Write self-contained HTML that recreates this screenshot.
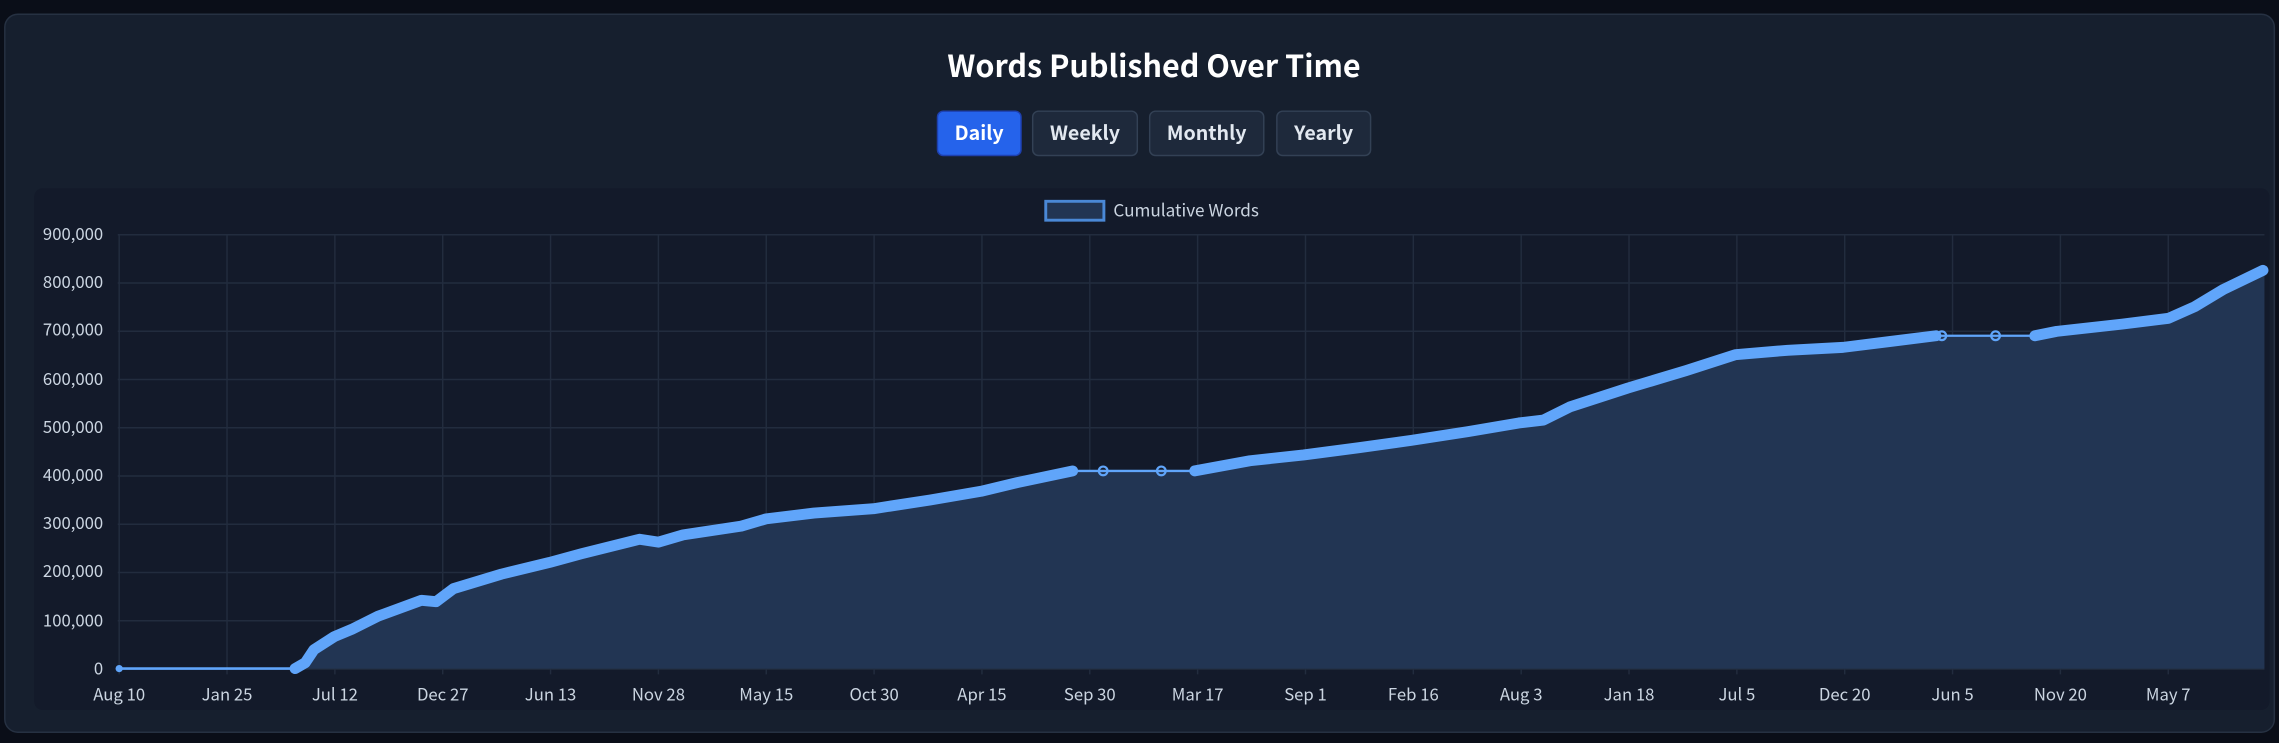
<!DOCTYPE html>
<html><head><meta charset="utf-8"><style>
html,body{margin:0;padding:0;background:#0a0e18;width:2279px;height:743px;overflow:hidden}
svg{display:block}
</style></head><body>
<svg width="2279" height="743" viewBox="0 0 1568 511.2" preserveAspectRatio="none" xmlns="http://www.w3.org/2000/svg" font-family="'Noto Sans CJK SC','Liberation Sans',sans-serif">
<rect x="0" y="0" width="1568" height="511.2" fill="#0a0e18"/>
<rect x="3.3" y="9.8" width="1561.5" height="494" rx="9" fill="#161f2e" stroke="#263142" stroke-width="1"/>
<text x="794" y="53" text-anchor="middle" fill="#ffffff" font-size="21" font-weight="bold">Words Published Over Time</text>
<rect x="645" y="76.5" width="57.5" height="30.5" rx="4" fill="#2563eb" stroke="#1e40af" stroke-width="1"/>
<text x="673.7" y="96.5" text-anchor="middle" fill="#fff" font-size="13.5" font-weight="bold">Daily</text>
<rect x="710.5" y="76.5" width="72" height="30.5" rx="4" fill="#1e293b" stroke="#334155" stroke-width="1"/>
<text x="746.5" y="96.5" text-anchor="middle" fill="#e2e8f0" font-size="13.5" font-weight="bold">Weekly</text>
<rect x="791" y="76.5" width="78.5" height="30.5" rx="4" fill="#1e293b" stroke="#334155" stroke-width="1"/>
<text x="830.2" y="96.5" text-anchor="middle" fill="#e2e8f0" font-size="13.5" font-weight="bold">Monthly</text>
<rect x="878.5" y="76.5" width="64.5" height="30.5" rx="4" fill="#1e293b" stroke="#334155" stroke-width="1"/>
<text x="910.7" y="96.5" text-anchor="middle" fill="#e2e8f0" font-size="13.5" font-weight="bold">Yearly</text>
<rect x="23.5" y="129.5" width="1538" height="359" rx="6" fill="#131a2a"/>
<rect x="719.5" y="138.5" width="40" height="13" fill="#223553" stroke="#4a88d6" stroke-width="2"/>
<text x="766" y="149" fill="#cbd5e1" font-size="11.8">Cumulative Words</text>
<g stroke="#222c3e" stroke-width="1">
<line x1="81" y1="161.5" x2="1558" y2="161.5"/><line x1="81" y1="194.7" x2="1558" y2="194.7"/><line x1="81" y1="227.9" x2="1558" y2="227.9"/><line x1="81" y1="261.1" x2="1558" y2="261.1"/><line x1="81" y1="294.3" x2="1558" y2="294.3"/><line x1="81" y1="327.5" x2="1558" y2="327.5"/><line x1="81" y1="360.7" x2="1558" y2="360.7"/><line x1="81" y1="393.9" x2="1558" y2="393.9"/><line x1="81" y1="427.1" x2="1558" y2="427.1"/><line x1="81" y1="460.3" x2="1558" y2="460.3"/>
<line x1="82" y1="161" x2="82" y2="464"/><line x1="156.2" y1="161" x2="156.2" y2="464"/><line x1="230.4" y1="161" x2="230.4" y2="464"/><line x1="304.6" y1="161" x2="304.6" y2="464"/><line x1="378.8" y1="161" x2="378.8" y2="464"/><line x1="453" y1="161" x2="453" y2="464"/><line x1="527.2" y1="161" x2="527.2" y2="464"/><line x1="601.4" y1="161" x2="601.4" y2="464"/><line x1="675.6" y1="161" x2="675.6" y2="464"/><line x1="749.8" y1="161" x2="749.8" y2="464"/><line x1="824" y1="161" x2="824" y2="464"/><line x1="898.2" y1="161" x2="898.2" y2="464"/><line x1="972.4" y1="161" x2="972.4" y2="464"/><line x1="1046.6" y1="161" x2="1046.6" y2="464"/><line x1="1120.8" y1="161" x2="1120.8" y2="464"/><line x1="1195" y1="161" x2="1195" y2="464"/><line x1="1269.2" y1="161" x2="1269.2" y2="464"/><line x1="1343.4" y1="161" x2="1343.4" y2="464"/><line x1="1417.6" y1="161" x2="1417.6" y2="464"/><line x1="1491.8" y1="161" x2="1491.8" y2="464"/>
</g>
<g fill="#cbd5e1" font-size="11.5" text-anchor="end">
<text x="71" y="165">900,000</text><text x="71" y="198">800,000</text><text x="71" y="231">700,000</text><text x="71" y="265">600,000</text><text x="71" y="298">500,000</text><text x="71" y="331">400,000</text><text x="71" y="364">300,000</text><text x="71" y="397">200,000</text><text x="71" y="431">100,000</text><text x="71" y="464">0</text>
</g>
<g fill="#cbd5e1" font-size="11.5" text-anchor="middle">
<text x="82" y="482">Aug 10</text><text x="156.2" y="482">Jan 25</text><text x="230.4" y="482">Jul 12</text><text x="304.6" y="482">Dec 27</text><text x="378.8" y="482">Jun 13</text><text x="453" y="482">Nov 28</text><text x="527.2" y="482">May 15</text><text x="601.4" y="482">Oct 30</text><text x="675.6" y="482">Apr 15</text><text x="749.8" y="482">Sep 30</text><text x="824" y="482">Mar 17</text><text x="898.2" y="482">Sep 1</text><text x="972.4" y="482">Feb 16</text><text x="1046.6" y="482">Aug 3</text><text x="1120.8" y="482">Jan 18</text><text x="1195" y="482">Jul 5</text><text x="1269.2" y="482">Dec 20</text><text x="1343.4" y="482">Jun 5</text><text x="1417.6" y="482">Nov 20</text><text x="1491.8" y="482">May 7</text>
</g>
<path d="M203,460 L210,456 L216,447 L230,438 L242,433 L260,424 L290,413 L300,414 L312,405 L345,395 L378,387 L400,381 L440,371 L453,373 L470,368 L510,362 L527,357 L560,353 L601,350 L640,344 L675,338 L700,332 L738,324 L749,324 L822,324 L860,317 L897,313 L935,308 L971,303 L1010,297 L1045,291 L1062,289 L1080,280 L1120,267 L1160,255 L1194,244 L1230,241 L1268,239 L1300,235 L1335,231 L1400,231 L1415,228 L1460,223 L1492,219 L1510,211 L1530,199 L1558,186 L1558,460 Z" fill="#223553"/>
<line x1="82" y1="460" x2="203" y2="460" stroke="#60a5fa" stroke-width="1.8"/>
<circle cx="82" cy="460" r="2.5" fill="#60a5fa"/>
<path d="M203,460 L210,456 L216,447 L230,438 L242,433 L260,424 L290,413 L300,414 L312,405 L345,395 L378,387 L400,381 L440,371 L453,373 L470,368 L510,362 L527,357 L560,353 L601,350 L640,344 L675,338 L700,332 L738,324" fill="none" stroke="#60a5fa" stroke-width="7.5" stroke-linejoin="round" stroke-linecap="round"/>
<line x1="738" y1="324" x2="822" y2="324" stroke="#60a5fa" stroke-width="1.6"/>
<circle cx="759" cy="324" r="3" fill="none" stroke="#60a5fa" stroke-width="1.5"/>
<circle cx="799" cy="324" r="3" fill="none" stroke="#60a5fa" stroke-width="1.5"/>
<path d="M822,324 L860,317 L897,313 L935,308 L971,303 L1010,297 L1045,291 L1062,289 L1080,280 L1120,267 L1160,255 L1194,244 L1230,241 L1268,239 L1300,235 L1332,231" fill="none" stroke="#60a5fa" stroke-width="7.5" stroke-linejoin="round" stroke-linecap="round"/>
<line x1="1332" y1="231" x2="1400" y2="231" stroke="#60a5fa" stroke-width="1.6"/>
<circle cx="1336" cy="231" r="3" fill="none" stroke="#60a5fa" stroke-width="1.5"/>
<circle cx="1373" cy="231" r="3" fill="none" stroke="#60a5fa" stroke-width="1.5"/>
<path d="M1400,231 L1415,228 L1460,223 L1492,219 L1510,211 L1530,199 L1557,186" fill="none" stroke="#60a5fa" stroke-width="7.5" stroke-linejoin="round" stroke-linecap="round"/>
</svg>
</body></html>
